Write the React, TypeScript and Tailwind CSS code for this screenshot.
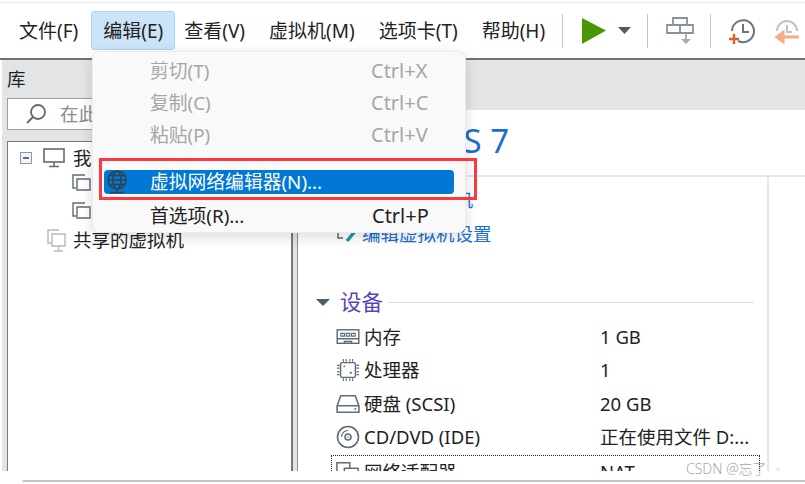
const menuBar = ["文件(F)", "编辑(E)", "查看(V)", "虚拟机(M)", "选项卡(T)", "帮助(H)"];

const devices = [
  { name: "内存", value: "1 GB", icon: <MemoryIcon /> },
  { name: "处理器", value: "1", icon: <CpuIcon /> },
  { name: "硬盘 (SCSI)", value: "20 GB", icon: <DiskIcon /> },
  { name: "CD/DVD (IDE)", value: "正在使用文件 D:...", icon: <CdIcon /> },
];

function MemoryIcon() {
  return (
    <svg width="24" height="18" viewBox="0 0 26 20" fill="none" stroke="#5f6b76" strokeWidth="1.6">
      <rect x="1" y="2" width="24" height="15" />
      <path d="M1 12h24M9 17v-2h8v2" />
      <path d="M5 6h4v3H5zM11 6h4v3h-4zM17 6h4v3h-4z" strokeWidth="1.3" />
    </svg>
  );
}

function CpuIcon() {
  return (
    <svg width="24" height="26" viewBox="0 0 26 26" fill="none" stroke="#5f6b76">
      <rect x="5" y="5" width="16" height="16" rx="1.5" strokeWidth="1.5" />
      <path d="M8 1v3M11 1v3M15 1v3M18 1v3M8 22v3M11 22v3M15 22v3M18 22v3M1 8h3M1 11h3M1 15h3M1 18h3M22 8h3M22 11h3M22 15h3M22 18h3" strokeWidth="1.2" />
      <circle cx="9" cy="9" r="1" fill="#5f6b76" stroke="none" />
      <circle cx="16" cy="16" r="1.2" fill="#5f6b76" stroke="none" />
    </svg>
  );
}

function DiskIcon() {
  return (
    <svg width="24" height="20" viewBox="0 0 26 22" fill="none" stroke="#5f6b76" strokeWidth="1.7">
      <path d="M5 2h16l4 11v7H1v-7zM1 13h24" />
      <path d="M20 16.500h2" />
    </svg>
  );
}

function CdIcon() {
  return (
    <svg width="24" height="24" viewBox="0 0 24 24" fill="none" stroke="#5f6b76" strokeWidth="1.6">
      <circle cx="12" cy="12" r="10.5" />
      <circle cx="12" cy="12" r="3" />
      <path d="M12 5.500a6.500 6.500 0 0 0-6.500 6.500" strokeWidth="1.2" />
      <circle cx="12" cy="12" r="0.8" fill="#5f6b76" stroke="none" />
    </svg>
  );
}

function NetIcon() {
  return (
    <svg width="24" height="22" viewBox="0 0 26 22" fill="none" stroke="#5f6b76" strokeWidth="1.6">
      <rect x="1" y="1" width="14" height="11" />
      <rect x="9" y="7" width="15" height="11" fill="#fff" />
    </svg>
  );
}

function VmIcon() {
  return (
    <svg width="20" height="20" viewBox="0 0 20 20" fill="none" stroke="#5f6b76" strokeWidth="1.4">
      <path d="M13 1H1v13h3" />
      <path d="M5 5h13v11H5z" />
    </svg>
  );
}

function SharedIcon() {
  return (
    <svg width="19" height="23" viewBox="0 0 19 23" fill="none" stroke="#b4bac0" strokeWidth="1.4">
      <path d="M12 1H1v13h3" />
      <path d="M5 5h13v12H5z" />
      <path d="M11.500 17v4M7 22h9" />
    </svg>
  );
}

function Play() {
  return (
    <svg width="50" height="26" viewBox="0 0 50 26">
      <path d="M0 0l24 12.500L0 26z" fill="#4b9508" />
      <path d="M36 9h13l-6.500 7z" fill="#4d5c6b" />
    </svg>
  );
}

function Snapshot({ flip }: { flip?: boolean }) {
  return flip ? (
    <svg width="28" height="28" viewBox="0 0 28 28" fill="none">
      <path d="M5 14a10 10 0 1 1 20 0" stroke="#bcc3c8" strokeWidth="2" />
      <path d="M15 8v7h5" stroke="#bcc3c8" strokeWidth="2" />
      <path d="M27 20H8M11 15.500l-6 4.500 6 4.500z" stroke="#f7ab87" strokeWidth="3" fill="#f7ab87" />
    </svg>
  ) : (
    <svg width="28" height="28" viewBox="0 0 28 28" fill="none">
      <path d="M4 14a11 11 0 1 1 6 10" stroke="#69747d" strokeWidth="2" />
      <path d="M15 7v8h6" stroke="#69747d" strokeWidth="2" />
      <path d="M6 17v10M1 22h10" stroke="#d9622b" strokeWidth="2.4" />
    </svg>
  );
}

export default function App() {
  return (
    <div className="relative h-[484px] w-[805px] overflow-hidden bg-white text-[18.5px] leading-[24px] text-[#222] font-['Noto_Sans','Noto_Sans_CJK_SC',sans-serif]">
      {/* toolbar */}
      <div className="mt-[2px] flex h-[58px] items-center border-t border-b-2 border-t-[#ececec] border-b-[#6f7275] pl-[7px] text-[19px]">
        {menuBar.map((m, i) => (
          <div
            key={m}
            className={
              i === 1
                ? "-mr-[3px] ml-[1px] flex h-[39px] items-center rounded-[3px] border border-[#a9d6f8] bg-[#cce4f7] px-[11px]"
                : "flex h-[39px] items-center px-[12px]"
            }
          >
            {m}
          </div>
        ))}
        <div className="ml-[5px] h-[34px] w-px bg-[#c4c6c8]" />
        <div className="ml-[19px]">
          <Play />
        </div>
        <div className="ml-[15px] h-[34px] w-px bg-[#c4c6c8]" />
        <svg className="ml-[18px]" width="28" height="28" viewBox="0 0 28 28" fill="none" stroke="#8a9299" strokeWidth="1.8">
          <path d="M7 1h14v7H7zM1 8h26v8H1zM14 8v8" />
          <path d="M20 16v8" stroke="#a3abb1" />
          <path d="M15 22h10l-5 5z" fill="#a3abb1" stroke="none" />
        </svg>
        <div className="ml-[16px] h-[34px] w-px bg-[#c4c6c8]" />
        <div className="ml-[17px] flex gap-[16px]">
          <Snapshot />
          <Snapshot flip />
        </div>
      </div>

      {/* body */}
      <div className="ml-[2px] flex h-[411px] overflow-hidden bg-[#e3e4e6]">
        <aside className="flex w-[290px] shrink-0 flex-col pl-[5px]">
          <div className="flex h-[38px] items-center text-[#222]">库</div>
          <div className="flex h-[32px] items-center gap-[13px] border border-[#9ea1a4] bg-white pl-[17px] text-[#8a8a8a]">
            <svg width="22" height="22" viewBox="0 0 22 22" fill="none" stroke="#5f6b76" strokeWidth="1.8">
              <circle cx="13" cy="9" r="7" />
              <path d="M8 14l-6 6" />
            </svg>
            在此处键入内容
          </div>
          <div className="mt-[11px] flex-1 border border-b-0 border-[#77797b] bg-white pt-[4px]">
            <div className="flex h-[24px] items-center pl-[12px]">
              <span className="flex h-[12px] w-[12px] items-center justify-center border border-[#8f979e] bg-[#f2f4f6]">
                <span className="h-[2px] w-[6px] bg-[#5a6f96]" />
              </span>
              <svg className="ml-[11px]" width="22" height="20" viewBox="0 0 22 20" fill="none" stroke="#5f6b76" strokeWidth="1.6">
                <rect x="1" y="1" width="20" height="13" />
                <path d="M11 14v4M6 18.500h10" />
              </svg>
              <span className="ml-[8px]">我的计算机</span>
            </div>
            <div className="flex h-[28px] items-center pl-[64px]">
              <VmIcon />
              <span className="ml-[4px]">CentOS 7</span>
            </div>
            <div className="flex h-[28px] items-center pl-[64px]">
              <VmIcon />
              <span className="ml-[4px]">CentOS 7</span>
            </div>
            <div className="flex h-[28px] items-center pl-[39px]">
              <SharedIcon />
              <span className="ml-[7px]">共享的虚拟机</span>
            </div>
          </div>
        </aside>
        <div className="w-[5px] shrink-0 border-l border-[#77797b]" />
        <main className="flex flex-1 flex-col border-l border-[#8c8e90]">
          <div className="h-[50px] shrink-0" />
          <div className="flex h-[67px] shrink-0 items-center border-b-2 border-[#e6e6e6] bg-white pb-[3px] pl-[68px] text-[33px] text-[#1b6fd0]">
            CentOS 7
          </div>
          <div className="flex flex-1 bg-white">
            <div className="w-[471px] shrink-0 border-r-2 border-[#e6e6e6] pl-[38px] pt-[5px]">
              <div className="flex h-[35px] items-center gap-[1px] text-[#1b6fd0]">
                <svg width="25" height="20" viewBox="0 0 25 20">
                  <path d="M8 2l12 8-12 8z" fill="#4b9508" />
                </svg>
                开启此虚拟机
              </div>
              <div className="-mt-[1px] flex h-[35px] items-center gap-[1px] text-[#1b6fd0]">
                <svg width="25" height="20" viewBox="0 0 25 20" fill="none">
                  <path d="M2 5v9h5" stroke="#5f6b76" strokeWidth="1.5" />
                  <path d="M11 17l9-11" stroke="#1f9aa8" strokeWidth="3.500" />
                </svg>
                编辑虚拟机设置
              </div>
              <div className="-ml-[20px] mt-[37px] flex h-[28px] items-center whitespace-nowrap">
                <span className="h-0 w-0 border-x-[7px] border-t-[7px] border-x-transparent border-t-[#4d5c6b]" />
                <span className="ml-[10px] text-[21.5px] text-[#5b43b5]">设备</span>
                <span className="ml-[5px] h-px w-[366px] bg-[#dcdcdc]" />
              </div>
              <div className="mt-[4px] -ml-[2px] w-[424px]">
                {devices.map((d) => (
                  <div key={d.name} className="flex h-[33.5px] items-center">
                    <span className="flex w-[30px] shrink-0 justify-start pl-[2px]">{d.icon}</span>
                    <span className="w-[236px] shrink-0">{d.name}</span>
                    <span className="whitespace-nowrap">{d.value}</span>
                  </div>
                ))}
                <div className="-ml-[3px] mt-[1px] flex h-[33.5px] w-[429px] items-center border border-dotted border-[#222] pl-[2px]">
                  <span className="flex w-[30px] shrink-0 justify-start pl-[2px]">
                    <NetIcon />
                  </span>
                  <span className="w-[236px] shrink-0">网络适配器</span>
                  <span>NAT</span>
                </div>
              </div>
            </div>
          </div>
        </main>
      </div>

      {/* bottom edge of the window below */}
      <div className="ml-[22px] mt-[9px] h-[2px] rounded-tl-[6px] bg-[#c4c4c4]" />

      {/* open edit menu */}
      <div className="absolute left-[92px] top-[51px] h-[182px] w-[374px] rounded-[8px] border border-[#ececec] bg-[#f9f9f9] pt-[3px] text-[18.800px] shadow-[0_4px_14px_rgba(0,0,0,0.14)]">
        {[
          ["剪切(T)", "Ctrl+X"],
          ["复制(C)", "Ctrl+C"],
          ["粘贴(P)", "Ctrl+V"],
        ].map(([label, key]) => (
          <div key={label} className="flex h-[32px] items-center text-[#a6a6a6]">
            <span className="w-[278px] pl-[57px]">{label}</span>
            <span className="text-[20px]">{key}</span>
          </div>
        ))}
        <div className="mx-[11px] mt-[19px] flex h-[24px] items-center rounded-[4px] bg-[#0078d4] text-white">
          <svg width="46" height="24" viewBox="0 0 46 24" fill="none" stroke="#34404c" strokeWidth="1.5">
            <circle cx="13" cy="10" r="9" />
            <ellipse cx="13" cy="10" rx="4" ry="9" />
            <path d="M4 10h18M5.500 5.500h15M5.500 14.500h15M13 19v3M6 22.500h14" />
          </svg>
          虚拟网络编辑器(N)...
        </div>
        <div className="mt-[10px] flex h-[24px] items-center">
          <span className="w-[279px] pl-[57px]">首选项(R)...</span>
          <span className="text-[20px]">Ctrl+P</span>
        </div>
      </div>
      <div className="absolute left-[99px] top-[158px] h-[42px] w-[378px] border-[3px] border-[#f83a3f]" />

      <div className="absolute left-[686px] top-[457px] text-[14px] font-light text-[#a8a8a8]">
        CSDN @忘了 <span className="ml-[6px] text-[9px]">ᵒ</span>
      </div>
    </div>
  );
}
